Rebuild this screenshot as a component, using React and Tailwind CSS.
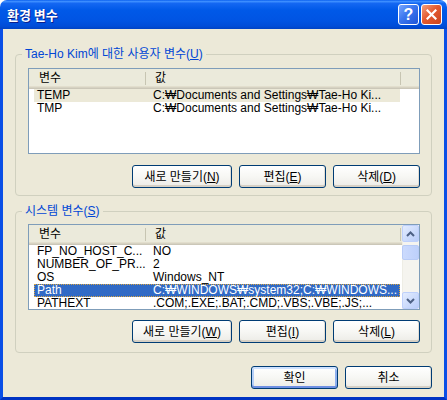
import React from "react";

function Btn({ children, w, def }) {
  return (
    <div
      className={`h-[23px] ${w} flex items-center justify-center rounded-[3px] border border-[#003C74] bg-linear-to-b from-[#FFFFFF] via-[#F7F7F4] to-[#ECEBE6] text-[12px] leading-[14px] text-black ${
        def
          ? "shadow-[inset_0_-2px_0_#6E8FE2,inset_0_2px_0_#CFE2FF,inset_2px_0_0_#B6CFF7,inset_-2px_0_0_#8FB0EE]"
          : "shadow-[inset_0_-2px_0_#D6D0C5,inset_-1px_0_0_#E2DED5]"
      }`}
    >
      {children}
    </div>
  );
}

function Header({ full }) {
  return (
    <div className="h-[20px] shrink-0 flex items-start bg-[#EBEADB] shadow-[inset_0_-1px_0_#CBC7B8,inset_0_-2px_0_#D6D2C2,inset_0_-3px_0_#E2DECD]">
      <div className="w-[116px] shrink-0 pl-[10px] pt-[2px] leading-[14px]">변수</div>
      <div className="w-px h-[13px] mt-[3px] shrink-0 bg-[#C7C5B2]" />
      <div className="w-[254px] shrink-0 pl-[9px] pt-[2px] leading-[14px]">값</div>
      <div className="w-px h-[13px] mt-[3px] shrink-0 bg-[#C7C5B2]" />
      {full && <div className="flex-1" />}
    </div>
  );
}

function Row({ name, value, sel }) {
  const cls =
    sel === "focus"
      ? "bg-[#316AC5] text-white outline-1 outline-dotted -outline-offset-1 outline-[#D9A441]"
      : sel === "gray"
      ? "bg-[#ECE9D8]"
      : "";
  return (
    <div className={`ml-[5px] w-[366px] h-[13px] shrink-0 flex leading-[13px] whitespace-nowrap ${cls}`}>
      <div className="w-[116px] shrink-0 pl-[3px] overflow-hidden">{name}</div>
      <div className="flex-1 pl-[3px] overflow-hidden">{value}</div>
    </div>
  );
}

function ScrollBtn({ up }) {
  return (
    <div className="w-[17px] h-[17px] shrink-0 flex items-center justify-center rounded-[2px] border border-[#BED0FB] bg-linear-to-br from-[#E3ECFE] to-[#B9CDF9]">
      <svg width="9" height="6" viewBox="0 0 9 6">
        {up ? (
          <path d="M1 5 L4.5 1.5 L8 5" fill="none" stroke="#4D6185" strokeWidth="2" />
        ) : (
          <path d="M1 1 L4.5 4.5 L8 1" fill="none" stroke="#4D6185" strokeWidth="2" />
        )}
      </svg>
    </div>
  );
}

function Scrollbar() {
  return (
    <div className="w-[17px] shrink-0 flex flex-col bg-[#F5F4EF] shadow-[inset_1px_0_0_#EEEDE5]">
      <ScrollBtn up />
      <div className="mt-[3px] h-[15px] shrink-0 rounded-[2px] border border-[#B8CBF6] bg-linear-to-r from-[#CBDAFD] to-[#BDD0FB]" />
      <div className="flex-1" />
      <ScrollBtn />
    </div>
  );
}

function ListView({ rows, scroll }) {
  return (
    <div className="ml-[12px] mr-[11px] h-[86px] shrink-0 border border-[#7F9DB9] bg-white flex overflow-hidden">
      <div className="flex-1 flex flex-col min-w-0">
        <Header full={!scroll} />
        {rows.map((r, i) => (
          <Row key={i} {...r} />
        ))}
      </div>
      {scroll && <Scrollbar />}
    </div>
  );
}

export default function App() {
  const userRows = [
    { name: "TEMP", value: "C:₩Documents and Settings₩Tae-Ho Ki...", sel: "gray" },
    { name: "TMP", value: "C:₩Documents and Settings₩Tae-Ho Ki..." },
  ];
  const sysRows = [
    { name: "FP_NO_HOST_C...", value: "NO" },
    { name: "NUMBER_OF_PR...", value: "2" },
    { name: "OS", value: "Windows_NT" },
    { name: "Path", value: "C:₩WINDOWS₩system32;C:₩WINDOWS...", sel: "focus" },
    { name: "PATHEXT", value: ".COM;.EXE;.BAT;.CMD;.VBS;.VBE;.JS;..." },
  ];
  return (
    <div className="w-[447px] h-[400px] flex flex-col font-['Liberation_Sans','DejaVu_Sans','Noto_Sans_CJK_KR',sans-serif] text-[12px] text-black">
      <div className="h-[29px] shrink-0 flex items-center rounded-t-[7px] bg-[linear-gradient(180deg,#0A5FEF_0%,#3D8EFF_5%,#1467F2_12%,#0059E8_35%,#0054E3_70%,#004DD8_90%,#0043C4_100%)] pl-[7px] pr-[5px]">
        <span className="flex-1 text-white font-bold text-[13px] leading-[16px] font-['Noto_Sans_CJK_KR',sans-serif] [text-shadow:1px_1px_0_#0A1E8C]">
          환경 변수
        </span>
        <div className="w-[21px] h-[21px] flex items-center justify-center rounded-[3px] border border-white bg-[linear-gradient(135deg,#77A6FF_0%,#3B76EE_45%,#1E55D8_100%)]">
          <span className="text-white font-bold text-[16px] leading-[16px] font-['Liberation_Sans',sans-serif]">?</span>
        </div>
        <div className="w-[2px]" />
        <div className="w-[21px] h-[21px] flex items-center justify-center rounded-[3px] border border-white bg-[linear-gradient(135deg,#F2A07F_0%,#E45A30_45%,#C9441E_100%)]">
          <svg width="11" height="11" viewBox="0 0 11 11">
            <path d="M1.5 1.5 L9.5 9.5 M9.5 1.5 L1.5 9.5" stroke="white" strokeWidth="2.2" strokeLinecap="square" />
          </svg>
        </div>
      </div>
      <div className="flex-1 flex flex-col bg-[#ECE9D8] border-x-[3px] border-b-[3px] border-x-[#0A4FE6] border-b-[#0033C3] pt-[18px] px-[12px]">
        <fieldset className="border border-[#D0D0BF] rounded-[4px] pb-[7px]">
          <legend className="ml-[6px] px-[3px] text-[#0046D5] leading-[14px]">
            Tae-Ho Kim에 대한 사용자 변수(<u>U</u>)
          </legend>
          <div className="mt-[7px]">
            <ListView rows={userRows} />
          </div>
          <div className="mt-[11px] ml-[12px] mr-[11px] flex justify-end gap-[7px]">
            <Btn w="w-[100px]">
              새로 만들기(<u>N</u>)
            </Btn>
            <Btn w="w-[87px]">
              편집(<u>E</u>)
            </Btn>
            <Btn w="w-[87px]">
              삭제(<u>D</u>)
            </Btn>
          </div>
        </fieldset>
        <fieldset className="mt-[8px] border border-[#D0D0BF] rounded-[4px] pb-[9px]">
          <legend className="ml-[6px] px-[3px] text-[#0046D5] leading-[14px]">
            시스템 변수(<u>S</u>)
          </legend>
          <div className="mt-[6px]">
            <ListView rows={sysRows} scroll />
          </div>
          <div className="mt-[10px] ml-[12px] mr-[11px] flex justify-end gap-[7px]">
            <Btn w="w-[100px]">
              새로 만들기(<u>W</u>)
            </Btn>
            <Btn w="w-[87px]">
              편집(<u>I</u>)
            </Btn>
            <Btn w="w-[87px]">
              삭제(<u>L</u>)
            </Btn>
          </div>
        </fieldset>
        <div className="mt-[13px] flex justify-end gap-[7px]">
          <Btn w="w-[87px]" def>
            확인
          </Btn>
          <Btn w="w-[87px]">취소</Btn>
        </div>
      </div>
    </div>
  );
}
